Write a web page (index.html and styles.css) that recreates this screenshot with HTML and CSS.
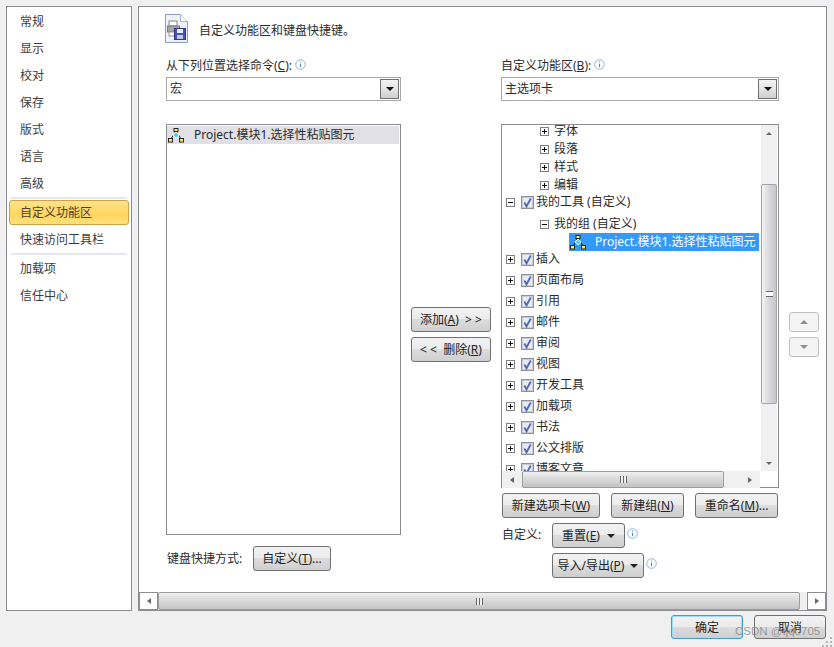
FILE: index.html
```html
<!DOCTYPE html>
<html lang="zh-CN">
<head>
<meta charset="utf-8">
<title>自定义功能区</title>
<link rel="stylesheet" href="styles.css">
</head>
<body>
<svg class="defs" width="0" height="0" aria-hidden="true">
  <symbol id="macro" viewBox="0 0 16 15">
    <path d="M8 3L3 11M8 3l5 8" fill="none" stroke="#222" stroke-width="1"/>
    <rect x="6" y="0.500" width="4" height="3" fill="#ffee55" stroke="#222"/>
    <path d="M8 4l3 3-3 3-3-3z" fill="#45d4ec" stroke="#fff" stroke-width="1"/>
    <rect x="0.500" y="10.500" width="4" height="3.500" fill="#ffee55" stroke="#222"/>
    <rect x="11.500" y="10.500" width="4" height="3.500" fill="#ffee55" stroke="#222"/>
  </symbol>
  <symbol id="plus" viewBox="0 0 9 9">
    <rect x=".5" y=".5" width="8" height="8" fill="#fff" stroke="#808080"/>
    <path d="M2 4.500h5M4.500 2v5" stroke="#111" fill="none"/>
  </symbol>
  <symbol id="minus" viewBox="0 0 9 9">
    <rect x=".5" y=".5" width="8" height="8" fill="#fff" stroke="#808080"/>
    <path d="M2 4.500h5" stroke="#111" fill="none"/>
  </symbol>
  <symbol id="check" viewBox="0 0 13 13">
    <rect x=".5" y=".5" width="12" height="12" fill="#dcdde6" stroke="#8f9198"/>
    <rect x="1.500" y="1.500" width="10" height="10" fill="#e9ebf3" stroke="#c9cbd6"/>
    <path d="M3.300 6.500L5.500 10.300 9.800 2.500" fill="none" stroke="#5267b5" stroke-width="1.800"/>
  </symbol>
  <symbol id="info" viewBox="0 0 11 11">
    <circle cx="5.500" cy="5.500" r="4.800" fill="#fff" stroke="#8fb2dc"/>
    <path d="M5.500 2.500v1M5.500 4.800v3.400" stroke="#4f86c6" fill="none"/>
  </symbol>
</svg>

<div class="dialog">
  <div class="panels">
    <nav class="nav">
      <div class="nav-item">常规</div>
      <div class="nav-item">显示</div>
      <div class="nav-item">校对</div>
      <div class="nav-item">保存</div>
      <div class="nav-item">版式</div>
      <div class="nav-item">语言</div>
      <div class="nav-item">高级</div>
      <div class="nav-sep"></div>
      <div class="nav-active">自定义功能区</div>
      <div class="nav-item">快速访问工具栏</div>
      <div class="nav-sep"></div>
      <div class="nav-item">加载项</div>
      <div class="nav-item">信任中心</div>
    </nav>

    <main class="main">
      <div class="content">
        <header class="heading">
          <svg class="doc-icon" width="24" height="30" viewBox="0 0 24 30">
            <path d="M.5.500h15l7 7v21H.5z" fill="#eef1fa" stroke="#8e9bbd"/>
            <path d="M15.500.500v7h7" fill="#fff" stroke="#a8b3cf"/>
            <rect x="4" y="7" width="8" height="5" fill="#fff" stroke="#888"/>
            <rect x="2.500" y="12" width="12" height="6" fill="#a4a6aa" stroke="#777"/>
            <rect x="4" y="18" width="7" height="4" fill="#fff" stroke="#999"/>
            <rect x="9.500" y="14.500" width="11" height="11" fill="#4654ad" stroke="#2d3680"/>
            <rect x="12" y="15" width="6" height="4" fill="#e6e8f5"/>
            <rect x="12" y="21" width="6" height="4" fill="#c5c8d8"/>
          </svg>
          <span>自定义功能区和键盘快捷键。</span>
        </header>

        <div class="columns">
          <section class="col-left">
            <div class="label">从下列位置选择命令(<u>C</u>):<svg class="info" width="11" height="11"><use href="#info"/></svg></div>
            <div class="select"><span class="select-text">宏</span><span class="select-btn"><i class="tri-down"></i></span></div>
            <div class="listbox">
              <div class="list-row"><svg width="16" height="15"><use href="#macro"/></svg><span>Project.模块1.选择性粘贴图元</span></div>
            </div>
            <div class="kbd-row">
              <span>键盘快捷方式:</span>
              <button class="btn kbd-btn">自定义(<u>T</u>)...</button>
            </div>
          </section>

          <section class="col-mid">
            <button class="btn mid-btn">添加(<u>A</u>) &nbsp;&gt; &gt;</button>
            <button class="btn mid-btn">&lt; &lt; &nbsp;删除(<u>R</u>)</button>
          </section>

          <section class="col-right">
            <div class="label">自定义功能区(<u>B</u>):<svg class="info" width="11" height="11"><use href="#info"/></svg></div>
            <div class="select"><span class="select-text">主选项卡</span><span class="select-btn"><i class="tri-down"></i></span></div>
            <div class="tree">
              <div class="tree-body">
                <div class="tree-rows">
                  <div class="row-sub first"><svg width="9" height="9"><use href="#plus"/></svg><span>字体</span></div>
                  <div class="row-sub"><svg width="9" height="9"><use href="#plus"/></svg><span>段落</span></div>
                  <div class="row-sub"><svg width="9" height="9"><use href="#plus"/></svg><span>样式</span></div>
                  <div class="row-sub"><svg width="9" height="9"><use href="#plus"/></svg><span>编辑</span></div>
                  <div class="row mine"><svg width="9" height="9"><use href="#minus"/></svg><svg class="chk" width="13" height="13"><use href="#check"/></svg><span>我的工具 (自定义)</span></div>
                  <div class="row-sub group"><svg width="9" height="9"><use href="#minus"/></svg><span>我的组 (自定义)</span></div>
                  <div class="row-macro"><svg width="16" height="15"><use href="#macro"/></svg><span>Project.模块1.选择性粘贴图元</span></div>
                  <div class="row tight"><svg width="9" height="9"><use href="#plus"/></svg><svg class="chk" width="13" height="13"><use href="#check"/></svg><span>插入</span></div>
                  <div class="row"><svg width="9" height="9"><use href="#plus"/></svg><svg class="chk" width="13" height="13"><use href="#check"/></svg><span>页面布局</span></div>
                  <div class="row"><svg width="9" height="9"><use href="#plus"/></svg><svg class="chk" width="13" height="13"><use href="#check"/></svg><span>引用</span></div>
                  <div class="row"><svg width="9" height="9"><use href="#plus"/></svg><svg class="chk" width="13" height="13"><use href="#check"/></svg><span>邮件</span></div>
                  <div class="row"><svg width="9" height="9"><use href="#plus"/></svg><svg class="chk" width="13" height="13"><use href="#check"/></svg><span>审阅</span></div>
                  <div class="row"><svg width="9" height="9"><use href="#plus"/></svg><svg class="chk" width="13" height="13"><use href="#check"/></svg><span>视图</span></div>
                  <div class="row"><svg width="9" height="9"><use href="#plus"/></svg><svg class="chk" width="13" height="13"><use href="#check"/></svg><span>开发工具</span></div>
                  <div class="row"><svg width="9" height="9"><use href="#plus"/></svg><svg class="chk" width="13" height="13"><use href="#check"/></svg><span>加载项</span></div>
                  <div class="row"><svg width="9" height="9"><use href="#plus"/></svg><svg class="chk" width="13" height="13"><use href="#check"/></svg><span>书法</span></div>
                  <div class="row"><svg width="9" height="9"><use href="#plus"/></svg><svg class="chk" width="13" height="13"><use href="#check"/></svg><span>公文排版</span></div>
                  <div class="row"><svg width="9" height="9"><use href="#plus"/></svg><svg class="chk" width="13" height="13"><use href="#check"/></svg><span>博客文章</span></div>
                </div>
                <div class="vscroll">
                  <span class="arrow-box"><i class="tri-up"></i></span>
                  <div class="vspace1"></div>
                  <div class="vthumb"><i class="vgrip"></i></div>
                  <div class="vspace2"></div>
                  <span class="arrow-box"><i class="tri-down small"></i></span>
                </div>
              </div>
              <div class="tree-hscroll">
                <span class="arrow-box h"><i class="tri-left"></i></span>
                <div class="hthumb tree-thumb"><i class="hgrip"></i></div>
                <div class="grow"></div>
                <span class="arrow-box h"><i class="tri-right"></i></span>
              </div>
            </div>
            <div class="tree-btns">
              <button class="btn b-newtab">新建选项卡(<u>W</u>)</button>
              <button class="btn b-newgroup">新建组(<u>N</u>)</button>
              <button class="btn b-rename">重命名(<u>M</u>)...</button>
            </div>
            <div class="custom-row">
              <span class="custom-label">自定义:</span>
              <button class="btn b-reset"><span>重置(<u>E</u>)</span><i class="tri-down dark"></i></button>
              <svg class="info2" width="11" height="11"><use href="#info"/></svg>
            </div>
            <div class="custom-row second">
              <button class="btn b-import"><span>导入/导出(<u>P</u>)</span><i class="tri-down dark"></i></button>
              <svg class="info2" width="11" height="11"><use href="#info"/></svg>
            </div>
          </section>

          <section class="col-updown">
            <div class="ud-btn"><i class="tri-up gray"></i></div>
            <div class="ud-btn"><i class="tri-down gray"></i></div>
          </section>
        </div>
      </div>
      <div class="main-hscroll">
        <span class="arrow-box h main"><i class="tri-left"></i></span>
        <div class="hthumb main-thumb"><i class="hgrip"></i></div>
        <div class="grow"></div>
        <span class="arrow-box h main"><i class="tri-right"></i></span>
      </div>
    </main>
  </div>

  <footer class="footer">
    <button class="btn foot-btn ok">确定</button>
    <button class="btn foot-btn">取消</button>
  </footer>
  <div class="watermark">CSDN @tjq0705</div>
  <svg class="grip" width="12" height="12" viewBox="0 0 12 12">
    <path d="M9 2h2v2H9zM5 6h2v2H5zM9 6h2v2H9zM1 10h2v2H1zM5 10h2v2H5zM9 10h2v2H9z" fill="#b5b5b5"/>
  </svg>
</div>
</body>
</html>
```
FILE: styles.css
```css
* { box-sizing: border-box; }
html, body { margin: 0; padding: 0; }
body {
  width: 834px;
  height: 647px;
  overflow: hidden;
  background: #f0f0f0;
  color: #2b2b2b;
  font: 12px/18px "Noto Sans", "Noto Sans CJK SC", sans-serif;
}
.defs { position: absolute; }
i { display: block; }

.dialog { position: relative; width: 834px; height: 647px; padding: 6px 7px 0 6px; }
.panels { display: flex; gap: 6px; height: 605px; }

/* left navigation */
.nav { width: 126px; background: #fff; border: 1px solid #8b8d93; padding-top: 1px; }
.nav-item { height: 27px; line-height: 27px; padding-left: 13px; color: #3c3c44; }
.nav-sep { height: 2px; margin: 0 4px 0 4px; background: #e6e6ee; }
.nav-active {
  height: 25px;
  line-height: 23px;
  margin: 1px 2px 1px 2px;
  padding-left: 10px;
  color: #4a4030;
  border: 1px solid #c9a24a;
  border-radius: 3px;
  background: linear-gradient(#fee28a, #ffd75f 60%, #fde07c);
}

/* main panel */
.main { width: 689px; display: flex; flex-direction: column; background: #fff; border: 1px solid #8b8d93; }
.content { flex: 1; padding: 7px 0 0 27px; min-height: 0; }
.heading { display: flex; align-items: flex-start; height: 39px; }
.doc-icon { margin-left: -1px; }
.heading span { margin: 8px 0 0 10px; }
.columns { display: flex; }

.col-left { width: 235px; }
.label { height: 20px; line-height: 18px; margin-top: 4px; white-space: nowrap; }
.info { margin-left: 3px; vertical-align: 0; }
.select {
  display: flex;
  height: 24px;
  border: 1px solid #a5a7ad;
  background: #fff;
  margin-top: 0;
}
.select-text { flex: 1; padding-left: 3px; line-height: 21px; }
.select-btn {
  width: 19px;
  margin: 1px;
  border: 1px solid #707070;
  background: linear-gradient(#f3f3f3, #e4e4e4 50%, #cfcfcf);
  display: flex;
  align-items: center;
  justify-content: center;
}
.listbox { height: 411px; margin-top: 23px; border: 1px solid #8b8d93; background: #fff; padding: 1px 1px 0 0; }
.list-row { display: flex; align-items: center; height: 18px; background: #e0e0e6; gap: 10px; padding-left: 1px; white-space: nowrap; }
.kbd-row { display: flex; align-items: center; margin-top: 11px; padding-left: 1px; }
.kbd-row span { width: 86px; }

.btn {
  display: block;
  padding: 0;
  font: inherit;
  color: #222;
  line-height: 22px;
  height: 25px;
  border: 1px solid #707070;
  border-radius: 3px;
  background: linear-gradient(#f2f2f2, #ebebeb 48%, #dcdcdc 50%, #cfcfcf);
  white-space: nowrap;
}
.kbd-btn { width: 78px; }

.col-mid { width: 100px; padding: 254px 0 0 10px; }
.mid-btn { width: 80px; margin-bottom: 5px; }

.col-right { width: 278px; }
.tree { height: 364px; margin-top: 23px; border: 1px solid #8b8d93; background: #fff; }
.tree-body { display: flex; height: 346px; overflow: hidden; }
.tree-rows { width: 259px; overflow: hidden; }
.row, .row-sub, .row-macro { display: flex; align-items: center; white-space: nowrap; }
.row { height: 18px; margin-top: 3px; padding-left: 4px; }
.row.mine { margin-top: -1px; }
.row.tight { margin-top: -1px; }
.row .chk { margin: 0 2px 0 6px; }
.row-sub { height: 18px; padding-left: 38px; }
.row-sub span { margin-left: 5px; }
.row-sub.first { margin-top: -3px; }
.row-sub.group { margin-top: 4px; }
.row-macro { height: 18px; margin: 0 2px 0 67px; gap: 9px; padding-left: 1px; background: #3399ff; color: #fff; }

.vscroll { width: 16px; background: #f0f0f0; display: flex; flex-direction: column; }
.arrow-box { height: 16px; flex: none; display: flex; align-items: center; justify-content: center; }
.vspace1 { height: 43px; }
.vthumb {
  height: 220px;
  border: 1px solid #a2a4a8;
  border-radius: 2px;
  background: linear-gradient(90deg, #f4f4f4, #d8d8d8 50%, #c6c6c6);
  display: flex;
  align-items: center;
  justify-content: center;
}
.vgrip { width: 7px; height: 6px; border-top: 1px solid #666; border-bottom: 1px solid #666; background: linear-gradient(#fff 40%, #666 40%, #666 60%, #fff 60%); }
.vspace2 { flex: 1; }

.tree-hscroll, .main-hscroll { display: flex; align-items: stretch; background: #f0f0f0; }
.tree-hscroll { width: 258px; height: 17px; }
.main-hscroll { height: 18px; }
.arrow-box.h { width: 20px; height: auto; }
.arrow-box.h.main { width: 19px; }
.hthumb {
  border: 1px solid #9a9ca0;
  border-radius: 2px;
  background: linear-gradient(#f0f0f0, #d8d8d8 50%, #c4c4c4);
  display: flex;
  align-items: center;
  justify-content: center;
}
.tree-thumb { width: 202px; }
.main-thumb { width: 642px; }
.hgrip { width: 7px; height: 7px; background: repeating-linear-gradient(90deg, #666 0 1px, #f0f0f0 1px 3px); }
.grow { flex: 1; }

.tree-btns { display: flex; margin-top: 5px; padding-left: 1px; }
.b-newtab { width: 98px; }
.b-newgroup { width: 73px; margin-left: 11px; }
.b-rename { width: 83px; margin-left: 11px; }
.custom-row { display: flex; align-items: flex-start; margin-top: 5px; padding-left: 1px; }
.custom-row.second { margin-top: 5px; padding-left: 51px; }
.custom-label { width: 50px; line-height: 24px; }
.b-reset { width: 73px; display: flex; align-items: center; justify-content: center; gap: 7px; }
.b-import { width: 92px; display: flex; align-items: center; justify-content: center; gap: 6px; }
.info2 { margin: 5px 0 0 2px; }

.col-updown { width: 40px; padding: 259px 0 0 10px; }
.ud-btn {
  width: 30px;
  height: 20px;
  margin-bottom: 5px;
  border: 1px solid #bfbfbf;
  border-radius: 3px;
  background: #f4f4f4;
  display: flex;
  align-items: center;
  justify-content: center;
}

/* triangles */
.tri-down, .tri-up { width: 0; height: 0; border-left: 4px solid transparent; border-right: 4px solid transparent; }
.tri-down { border-top: 4px solid #111; }
.tri-up { border-bottom: 4px solid #666; }
.tri-up { border-left-width: 3px; border-right-width: 3px; border-bottom-width: 3px; }
.tri-down.small { border-left-width: 3px; border-right-width: 3px; border-top-width: 3px; border-top-color: #666; }
.tri-down.dark { border-top-color: #222; }
.tri-up.gray { border-left-width: 4px; border-right-width: 4px; border-bottom: 4px solid #8e8e8e; }
.tri-down.gray { border-top-color: #8e8e8e; }
.tri-left, .tri-right { width: 0; height: 0; border-top: 3.500px solid transparent; border-bottom: 3.500px solid transparent; }
.tri-left { border-right: 4px solid #666; }
.tri-right { border-left: 4px solid #666; }

/* footer */
.footer { display: flex; justify-content: flex-end; gap: 11px; padding-top: 4px; margin-right: 1px; }
.foot-btn { width: 72px; height: 24px; line-height: 21px; }
.foot-btn.ok { border-color: #3c9fd6; box-shadow: inset 0 0 0 1px #a5dcf5; font-weight: 400; }

.watermark {
  position: absolute;
  left: 735px;
  top: 622px;
  color: rgba(130, 130, 130, .75);
  font: 11.500px/18px "Liberation Sans", sans-serif;
  white-space: nowrap;
}
.grip { position: absolute; right: 1px; bottom: 0; }
```
